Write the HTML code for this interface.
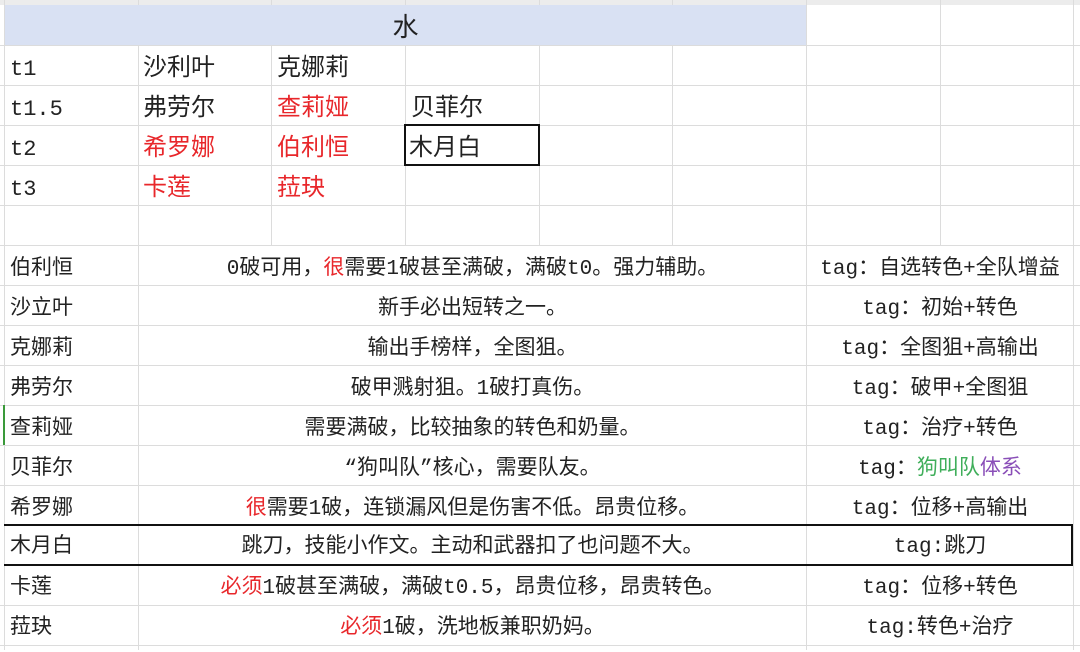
<!DOCTYPE html>
<html><head><meta charset="utf-8"><style>
body{margin:0;width:1080px;height:650px;background:#fff;overflow:hidden;position:relative;font-family:"Liberation Mono","Noto Sans CJK SC",monospace;color:#222}
.top{position:absolute;left:0;top:0;width:1080px;height:5px;background:#ececec}
.h{position:absolute;left:0;width:1080px;height:1px;background:#dcdcdc}
.v{position:absolute;width:1px;background:#dcdcdc}
.c{position:absolute;height:40px;line-height:46px;white-space:nowrap}
.n{font-size:24px}
.d{font-size:21px;text-align:center}
.m{font-size:21px}
.t{font-size:22px}
.r{color:#e8272b}
</style></head><body>
<div class="top"></div>
<div style="position:absolute;left:5px;top:5px;width:801px;height:40px;background:#d9e1f3"></div>
<div class="h" style="top:45px"></div><div class="h" style="top:85px"></div><div class="h" style="top:125px"></div><div class="h" style="top:165px"></div><div class="h" style="top:205px"></div><div class="h" style="top:245px"></div><div class="h" style="top:285px"></div><div class="h" style="top:325px"></div><div class="h" style="top:365px"></div><div class="h" style="top:405px"></div><div class="h" style="top:445px"></div><div class="h" style="top:485px"></div><div class="h" style="top:605px"></div><div class="h" style="top:645px"></div>
<div class="v" style="left:4px;top:0;height:650px"></div>
<div class="v" style="left:138px;top:45px;height:605px"></div>
<div class="v" style="left:271px;top:45px;height:200px"></div>
<div class="v" style="left:405px;top:45px;height:200px"></div>
<div class="v" style="left:539px;top:45px;height:200px"></div>
<div class="v" style="left:672px;top:45px;height:200px"></div>
<div class="v" style="left:806px;top:0;height:650px"></div>
<div class="v" style="left:940px;top:0;height:245px"></div>
<div class="v" style="left:1073px;top:0;height:650px"></div>
<div class="v" style="left:138px;top:0;height:5px"></div><div class="v" style="left:271px;top:0;height:5px"></div><div class="v" style="left:405px;top:0;height:5px"></div><div class="v" style="left:539px;top:0;height:5px"></div><div class="v" style="left:672px;top:0;height:5px"></div>
<div class="c n" style="left:5px;top:6px;width:801px;text-align:center;font-size:26px">水</div>
<div class="c t" style="left:10px;top:47px">t1</div><div class="c n" style="left:143px;top:47px">沙利叶</div><div class="c n" style="left:277px;top:47px">克娜莉</div>
<div class="c t" style="left:10px;top:87px">t1.5</div><div class="c n" style="left:143px;top:87px">弗劳尔</div><div class="c n r" style="left:277px;top:87px">查莉娅</div><div class="c n" style="left:411px;top:87px">贝菲尔</div>
<div class="c t" style="left:10px;top:127px">t2</div><div class="c n r" style="left:143px;top:127px">希罗娜</div><div class="c n r" style="left:277px;top:127px">伯利恒</div>
<div style="position:absolute;left:404px;top:124px;width:132px;height:38px;border:2px solid #111"></div>
<div class="c n" style="left:409px;top:127px">木月白</div>
<div class="c t" style="left:10px;top:167px">t3</div><div class="c n r" style="left:143px;top:167px">卡莲</div><div class="c n r" style="left:277px;top:167px">菈玦</div>
<div class="c m" style="left:10px;top:247px">伯利恒</div>
<div class="c d" style="left:139px;top:247px;width:667px">0破可用，<span class="r">很</span>需要1破甚至满破，满破t0。强力辅助。</div>
<div class="c d" style="left:807px;top:247px;width:266px">tag：自选转色+全队增益</div>
<div class="c m" style="left:10px;top:287px">沙立叶</div>
<div class="c d" style="left:139px;top:287px;width:667px">新手必出短转之一。</div>
<div class="c d" style="left:807px;top:287px;width:266px">tag：初始+转色</div>
<div class="c m" style="left:10px;top:327px">克娜莉</div>
<div class="c d" style="left:139px;top:327px;width:667px">输出手榜样，全图狙。</div>
<div class="c d" style="left:807px;top:327px;width:266px">tag：全图狙+高输出</div>
<div class="c m" style="left:10px;top:367px">弗劳尔</div>
<div class="c d" style="left:139px;top:367px;width:667px">破甲溅射狙。1破打真伤。</div>
<div class="c d" style="left:807px;top:367px;width:266px">tag：破甲+全图狙</div>
<div style="position:absolute;left:3px;top:405px;width:2px;height:40px;background:#3a9a3a"></div>
<div class="c m" style="left:10px;top:407px">查莉娅</div>
<div class="c d" style="left:139px;top:407px;width:667px">需要满破，比较抽象的转色和奶量。</div>
<div class="c d" style="left:807px;top:407px;width:266px">tag：治疗+转色</div>
<div class="c m" style="left:10px;top:447px">贝菲尔</div>
<div class="c d" style="left:139px;top:447px;width:667px">“狗叫队”核心，需要队友。</div>
<div class="c d" style="left:807px;top:447px;width:266px">tag：<span style="color:#3fae5a">狗叫队</span><span style="color:#8a4fb8">体系</span></div>
<div class="c m" style="left:10px;top:487px">希罗娜</div>
<div class="c d" style="left:139px;top:487px;width:667px"><span class="r">很</span>需要1破，连锁漏风但是伤害不低。昂贵位移。</div>
<div class="c d" style="left:807px;top:487px;width:266px">tag：位移+高输出</div>
<div style="position:absolute;left:4px;top:524px;width:1067px;height:38px;border:2px solid #111;border-left:none"></div>
<div class="c m" style="left:10px;top:525px">木月白</div>
<div class="c d" style="left:139px;top:525px;width:667px">跳刀，技能小作文。主动和武器扣了也问题不大。</div>
<div class="c d" style="left:807px;top:525px;width:266px">tag:跳刀</div>
<div class="c m" style="left:10px;top:566px">卡莲</div>
<div class="c d" style="left:139px;top:566px;width:667px"><span class="r">必须</span>1破甚至满破，满破t0.5，昂贵位移，昂贵转色。</div>
<div class="c d" style="left:807px;top:566px;width:266px">tag：位移+转色</div>
<div class="c m" style="left:10px;top:606px">菈玦</div>
<div class="c d" style="left:139px;top:606px;width:667px"><span class="r">必须</span>1破，洗地板兼职奶妈。</div>
<div class="c d" style="left:807px;top:606px;width:266px">tag:转色+治疗</div>
</body></html>
